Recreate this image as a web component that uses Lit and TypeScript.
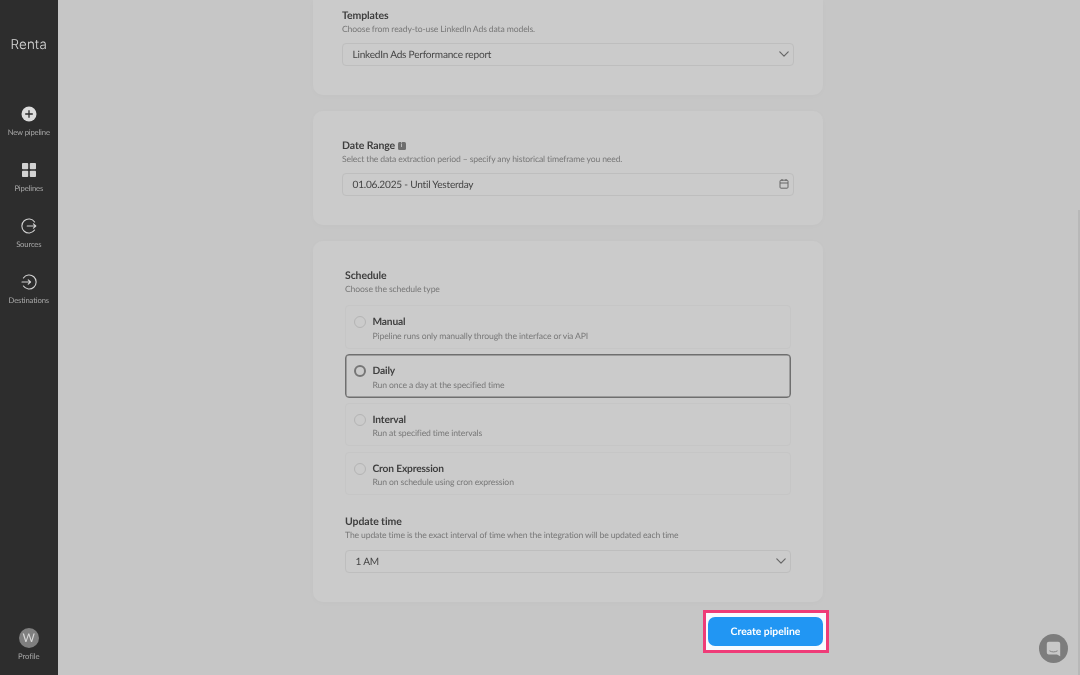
import { LitElement, html, css, svg } from "lit";
import { customElement } from "lit/decorators.js";

const chevron = html`<svg class="ico" width="12" height="12" viewBox="0 0 12 12" fill="none" stroke="#666" stroke-width="1.2" stroke-linecap="round" stroke-linejoin="round"><path d="M1.8 3.9 6 8.1l4.2-4.2"/></svg>`;
const calendar = html`<svg class="ico" width="12" height="12" viewBox="0 0 12 12" fill="none" stroke="#666" stroke-width="1"><rect x="2" y="2.2" width="8" height="8" rx="1"/><path d="M2 5h8M4 1v2M8 1v2"/></svg>`;

const navIcons = [
  svg`<circle cx="8" cy="8" r="7.5" fill="#dcdcdc"/><path d="M8 4.2v7.6M4.2 8h7.6" stroke="#2d2d2d" stroke-width="1.3" fill="none"/>`,
  svg`<rect x="1" y="1" width="6.2" height="6.2" rx=".8" fill="#d2d2d2"/><rect x="8.8" y="1" width="6.2" height="6.2" rx=".8" fill="#d2d2d2"/><rect x="1" y="8.8" width="6.2" height="6.2" rx=".8" fill="#d2d2d2"/><rect x="8.8" y="8.8" width="6.2" height="6.2" rx=".8" fill="#d2d2d2"/>`,
  svg`<path d="M13.6 4A7 7 0 1 0 13.6 12" fill="none" stroke="#d2d2d2" stroke-width="1.1" stroke-linecap="round"/><path d="M6.2 8h8.6M12.4 5.8 14.8 8l-2.4 2.2" fill="none" stroke="#d2d2d2" stroke-width="1.1" stroke-linecap="round" stroke-linejoin="round"/>`,
  svg`<path d="M2.4 4A7 7 0 1 1 2.4 12" fill="none" stroke="#d2d2d2" stroke-width="1.1" stroke-linecap="round"/><path d="M1 8h8.6M7.2 5.8 9.6 8l-2.4 2.2" fill="none" stroke="#d2d2d2" stroke-width="1.1" stroke-linecap="round" stroke-linejoin="round"/>`,
];

@customElement("app-root")
export class AppRoot extends LitElement {
  static styles = css`
    :host { display: block; width: 1080px; height: 675px; overflow: hidden; position: relative; background: #c6c6c6; font-family: Lato, "Liberation Sans", sans-serif; color: #3a3a3a; text-rendering: geometricPrecision; }
    .shell { display: flex; height: 675px; will-change: transform; }
    .side { width: 57.5px; flex: none; background: #2d2d2d; display: flex; flex-direction: column; align-items: center; color: #a9a9a9; }
    .logo { font-family: Inter, sans-serif; font-weight: 300; font-size: 13.4px; color: #d8d8d8; margin-top: 37px; height: 17px; line-height: 17px; letter-spacing: .2px; margin-bottom: 52px; }
    .nav { display: flex; flex-direction: column; align-items: center; height: 56px; gap: 5px; font-size: 7.7px; letter-spacing: -.17px; line-height: 10px; white-space: nowrap; }
    .nav svg { display: block; }
    .spacer { flex: 1; }
    .profile { display: flex; flex-direction: column; align-items: center; gap: 3px; font-size: 7.7px; letter-spacing: -.05px; line-height: 10px; margin-bottom: 14px; }
    .avatar { width: 20px; height: 20px; border-radius: 50%; background: #7f7f7f; color: #d9d9d9; font-size: 12px; display: flex; align-items: center; justify-content: center; }
    main { flex: 1; display: flex; flex-direction: column; align-items: center; padding-right: 1.5px; }
    .col { width: 510px; display: flex; flex-direction: column; gap: 16px; }
    .card { background: #cbcbcb; border-radius: 10px; padding: 0 29px; box-shadow: 0 1px 6px rgba(0,0,0,.02); }
    .c1 { height: 95px; padding-top: 9.7px; box-sizing: border-box; border-radius: 0 0 10px 10px; }
    .c2 { height: 114px; padding-top: 28.7px; box-sizing: border-box; }
    .c3 { height: 361px; padding: 28.7px 32px 0; box-sizing: border-box; }
    .title { font-size: 10.5px; letter-spacing: -.1px; font-weight: 700; line-height: 13px; color: #3f3f3f; display: flex; align-items: center; gap: 2.5px; }
    .desc { font-size: 8.65px; letter-spacing: -.14px; line-height: 11px; color: #787878; margin-top: .3px; }
    .field { margin-top: 9px; height: 23px; box-sizing: border-box; border: 1px solid #bebebe; border-radius: 4px; padding: 0 3px 0 9.5px; display: flex; align-items: center; justify-content: space-between; font-size: 10.1px; letter-spacing: -.22px; color: #454545; }
    .field span { position: relative; top: .5px; }
    .info { width: 8px; height: 8px; border-radius: 1.5px; background: #6e6e6e; color: #cbcbcb; font-size: 6.5px; line-height: 8px; text-align: center; font-weight: 700; }
    .opts { display: flex; flex-direction: column; gap: 5.2px; margin-top: 11px; }
    .opt { height: 43.7px; box-sizing: border-box; border: 1px solid #c6c6c6; border-radius: 4px; display: flex; gap: 6.5px; padding: 10.5px 8px; }
    .opt.sel { border: 1px solid #6f6f6f; box-shadow: inset 0 0 0 .5px #6f6f6f; }
    .radio { width: 12px; height: 12px; box-sizing: border-box; border: 1px solid #b4b4b4; border-radius: 50%; flex: none; margin-top: -.5px; }
    .sel .radio { border: 2.5px solid #767676; }
    .opt b { display: block; font-size: 10.2px; letter-spacing: -.15px; line-height: 13px; font-weight: 700; color: #3f3f3f; }
    .opt span { display: block; font-size: 8.65px; letter-spacing: -.13px; line-height: 11px; color: #787878; margin-top: .2px; }
    .sec { margin-top: 20.5px; }
    .sec .field { margin-top: 9.5px; }
    .foot { display: flex; justify-content: flex-end; margin: 8px -6px 0 0; }
    .hl { border: 3px solid #ef3c78; background: #f8fbff; padding: 4px 3px 4px 2px; display: flex; }
    .btn { width: 115px; height: 29px; box-sizing: border-box; border: 0; border-radius: 7px; background: #2196f3; color: #fff; font: 700 10.4px/28px Lato, sans-serif; padding: 1px 0 0; text-align: center; text-rendering: geometricPrecision; }
    .track { position: absolute; right: 0; top: 210px; bottom: 0; width: 2px; background: #b8b8b8; }
    .chat { position: absolute; left: 1039px; top: 634px; width: 29px; height: 29px; border-radius: 50%; background: #7d7d7d; display: flex; align-items: center; justify-content: center; }
  `;

  private opt(t: string, d: string, sel = false) {
    return html`<div class="opt ${sel ? "sel" : ""}"><div class="radio"></div><div><b>${t}</b><span>${d}</span></div></div>`;
  }

  render() {
    const labels = ["New pipeline", "Pipelines", "Sources", "Destinations"];
    return html`<div class="shell">
      <aside class="side">
        <div class="logo">Renta</div>
        ${labels.map((l, i) => html`<div class="nav"><svg width="16" height="16" viewBox="0 0 16 16">${navIcons[i]}</svg><div>${l}</div></div>`)}
        <div class="spacer"></div>
        <div class="profile"><div class="avatar">W</div><div>Profile</div></div>
      </aside>
      <main>
        <div class="col">
          <section class="card c1">
            <div class="title">Templates</div>
            <div class="desc">Choose from ready-to-use LinkedIn Ads data models.</div>
            <div class="field"><span>LinkedIn Ads Performance report</span>${chevron}</div>
          </section>
          <section class="card c2">
            <div class="title">Date Range <span class="info">i</span></div>
            <div class="desc">Select the data extraction period – specify any historical timeframe you need.</div>
            <div class="field"><span>01.06.2025 - Until Yesterday</span>${calendar}</div>
          </section>
          <section class="card c3">
            <div class="title">Schedule</div>
            <div class="desc">Choose the schedule type</div>
            <div class="opts">
              ${this.opt("Manual", "Pipeline runs only manually through the interface or via API")}
              ${this.opt("Daily", "Run once a day at the specified time", true)}
              ${this.opt("Interval", "Run at specified time intervals")}
              ${this.opt("Cron Expression", "Run on schedule using cron expression")}
            </div>
            <div class="sec">
              <div class="title">Update time</div>
              <div class="desc">The update time is the exact interval of time when the integration will be updated each time</div>
              <div class="field"><span>1 AM</span>${chevron}</div>
            </div>
          </section>
        </div>
        <div class="col">
          <div class="foot"><div class="hl"><button class="btn">Create pipeline</button></div></div>
        </div>
      </main>
    </div>
    <div class="track"></div>
    <div class="chat"><svg width="15" height="16" viewBox="0 0 15 16"><path d="M2.8 .8h9.4a2 2 0 0 1 2 2v12.4l-3.2-1.6H2.8a2 2 0 0 1-2-2V2.800a2 2 0 0 1 2-2z" fill="#c8c8c8"/><path d="M3.800 10c2.200 1.300 5.200 1.300 7.400 0" stroke="#7d7d7d" stroke-width=".9" fill="none" stroke-linecap="round"/></svg></div>`;
  }
}
